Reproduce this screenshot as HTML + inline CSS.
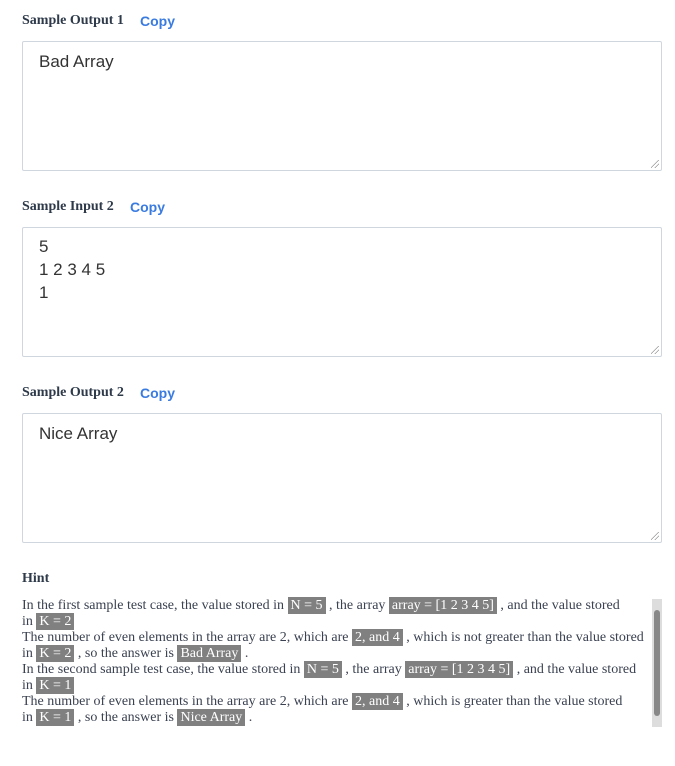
<!DOCTYPE html>
<html><head><style>
body{margin:0;background:#fff;width:675px;height:766px;overflow:hidden;position:relative;font-family:"Liberation Serif",serif;}
.lbl{position:absolute;left:22px;font-weight:bold;font-size:14px;color:#2e3a4a;}
.copy{position:absolute;font-family:"Liberation Sans",sans-serif;font-weight:bold;font-size:14px;color:#3a7be0;}
.box{position:absolute;left:22px;width:638px;height:128px;border:1px solid #cfd6de;border-radius:2px;font-family:"Liberation Sans",sans-serif;font-size:17px;color:#333;line-height:23px;box-sizing:content-box;}
.box .t{position:absolute;left:16px;top:7px;}
.grip{position:absolute;right:2px;bottom:2px;width:8px;height:8px;background:linear-gradient(135deg,transparent 45%,#999 45%,#999 52%,transparent 52%,transparent 70%,#999 70%,#999 77%,transparent 77%);}
.hint{position:absolute;left:22px;top:598px;width:640px;white-space:nowrap;font-size:14px;line-height:16px;color:#3a4150;}
.h{background:#808080;color:#fff;padding:1px 3px;}
.sb{position:absolute;left:652px;top:599px;width:10px;height:128px;background:#ddd;}
.sb .th{position:absolute;left:2px;top:11px;width:6px;height:106px;background:#888;border-radius:3px;}
</style></head><body>
<div class="lbl" style="top:13px">Sample Output 1</div><div class="copy" style="left:140px;top:13px">Copy</div>
<div class="box" style="top:41px"><div class="t" style="top:8px">Bad Array</div><div class="grip"></div></div>
<div class="lbl" style="top:199px">Sample Input 2</div><div class="copy" style="left:130px;top:199px">Copy</div>
<div class="box" style="top:227px"><div class="t">5<br>1 2 3 4 5<br>1</div><div class="grip"></div></div>
<div class="lbl" style="top:385px">Sample Output 2</div><div class="copy" style="left:140px;top:385px">Copy</div>
<div class="box" style="top:413px"><div class="t" style="top:8px">Nice Array</div><div class="grip"></div></div>
<div class="lbl" style="top:571px">Hint</div>
<div class="hint">In the first sample test case, the value stored in <span class="h">N = 5</span> , the array <span class="h">array = [1 2 3 4 5]</span> , and the value stored<br>in <span class="h">K = 2</span><br>The number of even elements in the array are 2, which are <span class="h">2, and 4</span> , which is not greater than the value stored<br>in <span class="h">K = 2</span> , so the answer is <span class="h">Bad Array</span> .<br>In the second sample test case, the value stored in <span class="h">N = 5</span> , the array <span class="h">array = [1 2 3 4 5]</span> , and the value stored<br>in <span class="h">K = 1</span><br>The number of even elements in the array are 2, which are <span class="h">2, and 4</span> , which is greater than the value stored<br>in <span class="h">K = 1</span> , so the answer is <span class="h">Nice Array</span> .</div>
<div class="sb"><div class="th"></div></div>
</body></html>
